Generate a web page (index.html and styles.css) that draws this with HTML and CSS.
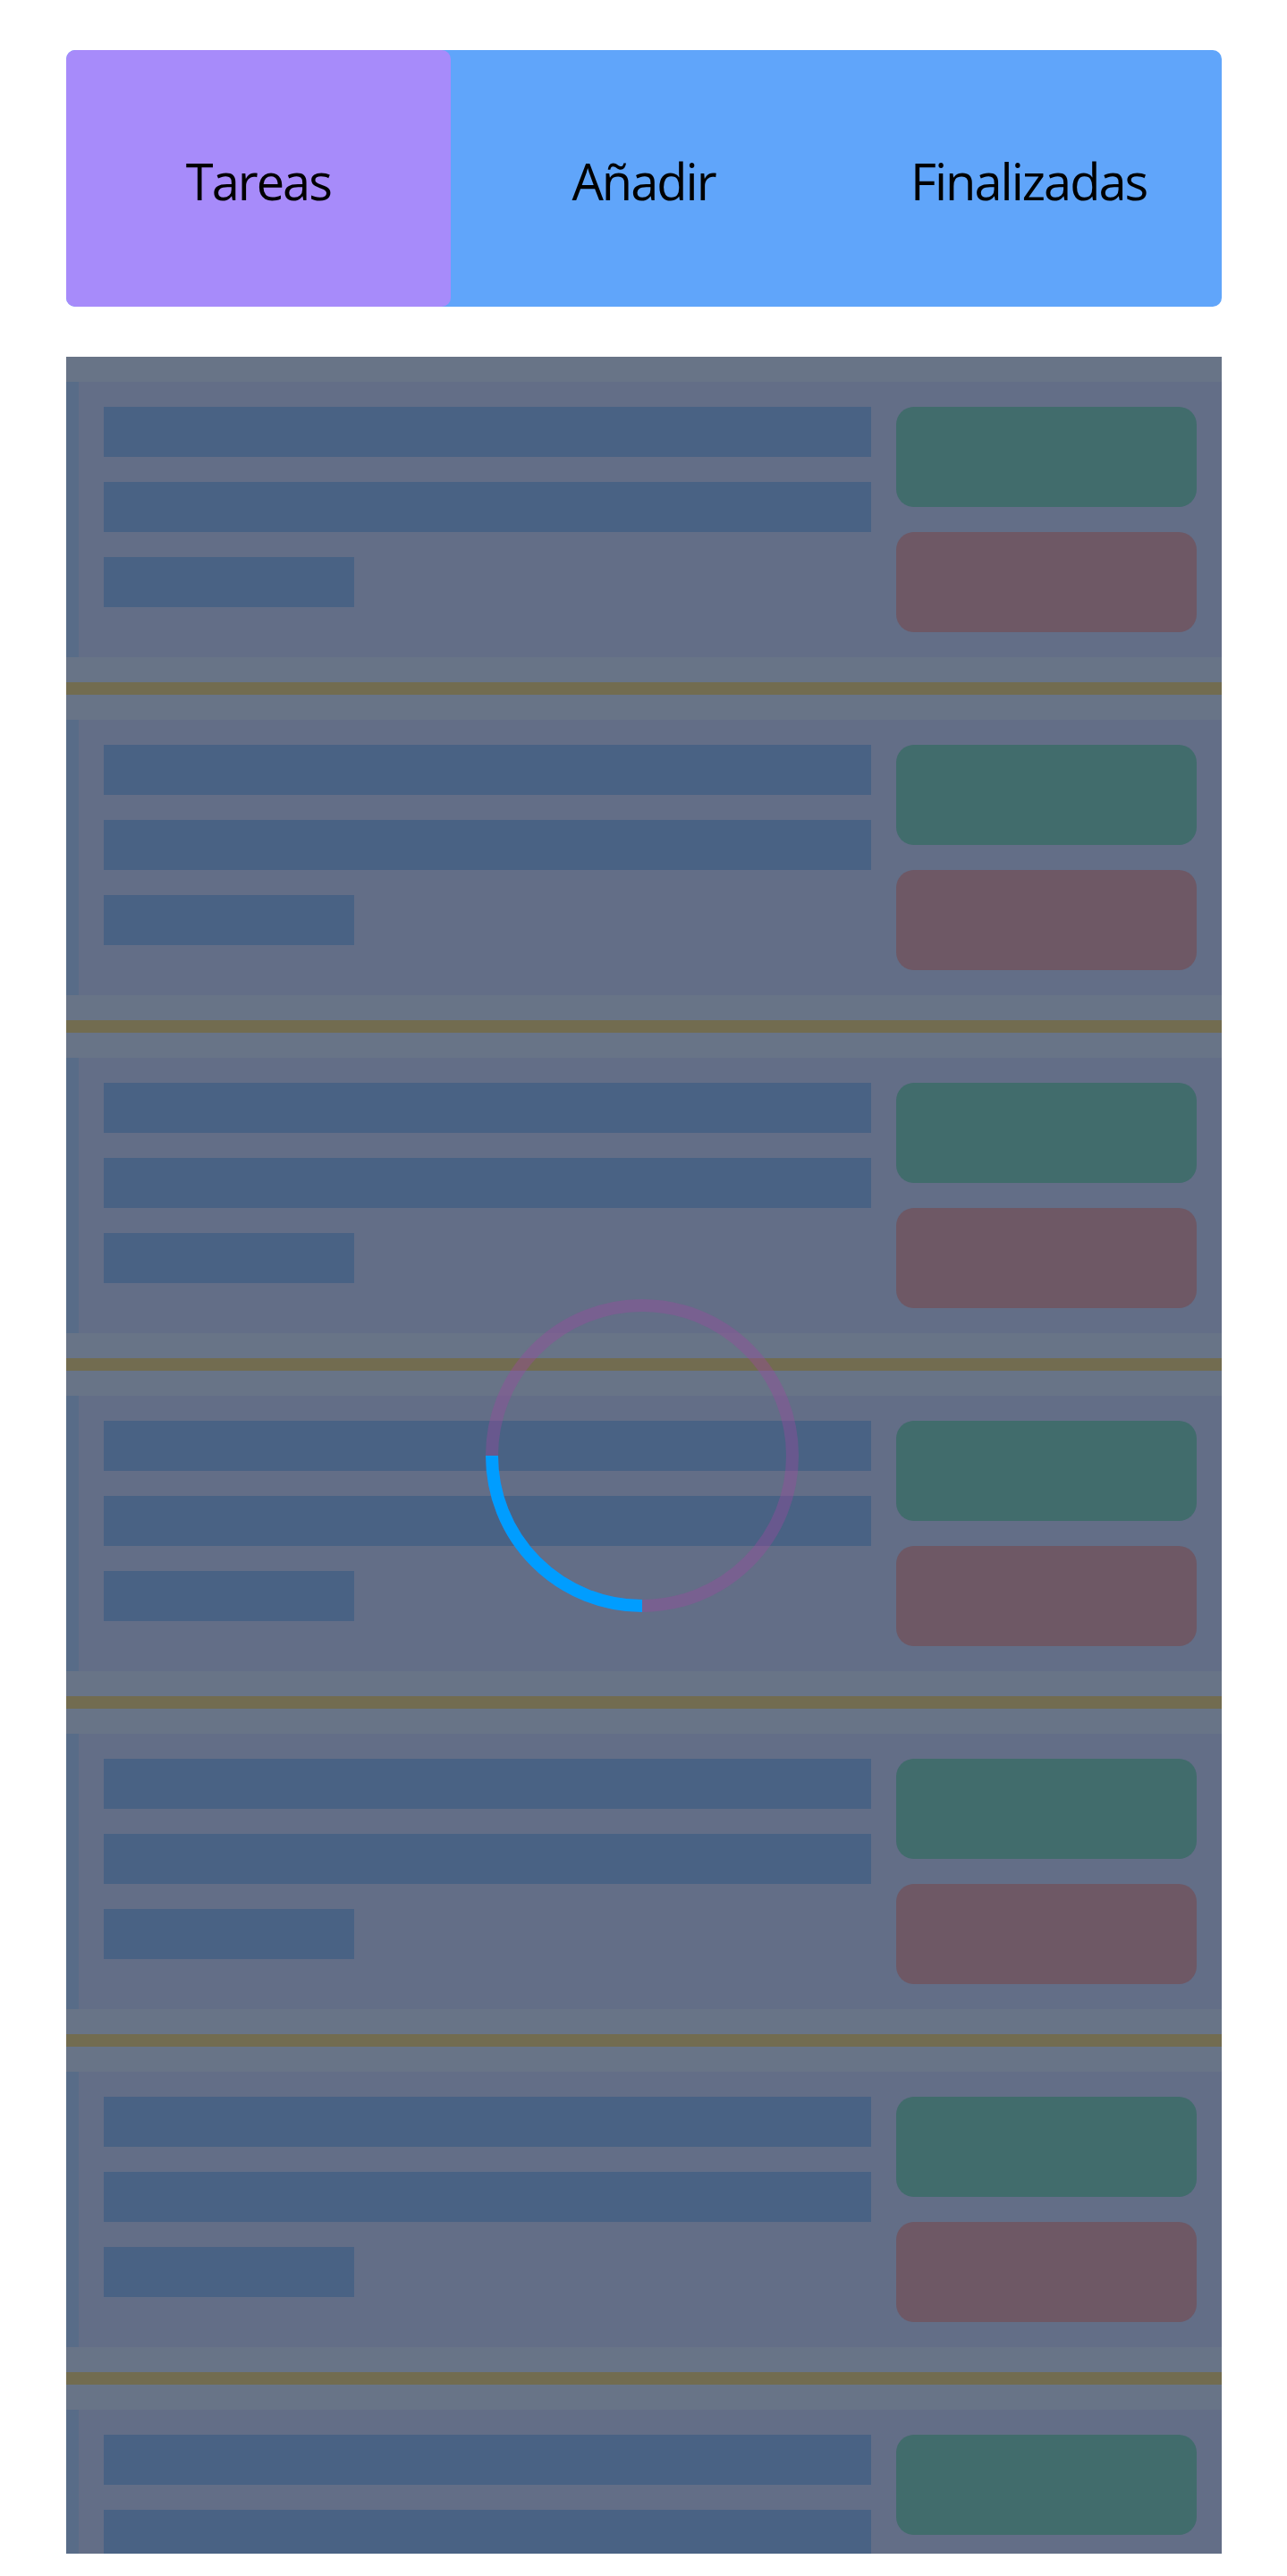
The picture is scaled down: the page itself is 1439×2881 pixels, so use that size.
FILE: index.html
```html
<!DOCTYPE html>
<html lang="es">
<head>
<meta charset="utf-8">
<title>Tareas</title>
<link rel="stylesheet" href="styles.css">
</head>
<body>
<div class="page">
  <nav class="tabs">
    <div class="tab tab-active">Tareas</div>
    <div class="tab">Añadir</div>
    <div class="tab">Finalizadas</div>
  </nav>
  <section class="list">
    <div class="item"><div class="card"><div class="lines"><div class="bar"></div><div class="bar"></div><div class="bar bar-short"></div></div><div class="actions"><div class="btn btn-ok"></div><div class="btn btn-del"></div></div></div><div class="sep"><div class="sep-line"></div></div></div>
    <div class="item"><div class="card"><div class="lines"><div class="bar"></div><div class="bar"></div><div class="bar bar-short"></div></div><div class="actions"><div class="btn btn-ok"></div><div class="btn btn-del"></div></div></div><div class="sep"><div class="sep-line"></div></div></div>
    <div class="item"><div class="card"><div class="lines"><div class="bar"></div><div class="bar"></div><div class="bar bar-short"></div></div><div class="actions"><div class="btn btn-ok"></div><div class="btn btn-del"></div></div></div><div class="sep"><div class="sep-line"></div></div></div>
    <div class="item"><div class="card"><div class="lines"><div class="bar"></div><div class="bar"></div><div class="bar bar-short"></div></div><div class="actions"><div class="btn btn-ok"></div><div class="btn btn-del"></div></div></div><div class="sep"><div class="sep-line"></div></div></div>
    <div class="item"><div class="card"><div class="lines"><div class="bar"></div><div class="bar"></div><div class="bar bar-short"></div></div><div class="actions"><div class="btn btn-ok"></div><div class="btn btn-del"></div></div></div><div class="sep"><div class="sep-line"></div></div></div>
    <div class="item"><div class="card"><div class="lines"><div class="bar"></div><div class="bar"></div><div class="bar bar-short"></div></div><div class="actions"><div class="btn btn-ok"></div><div class="btn btn-del"></div></div></div><div class="sep"><div class="sep-line"></div></div></div>
    <div class="item"><div class="card"><div class="lines"><div class="bar"></div><div class="bar"></div><div class="bar bar-short"></div></div><div class="actions"><div class="btn btn-ok"></div><div class="btn btn-del"></div></div></div><div class="sep"><div class="sep-line"></div></div></div>
    <div class="spinner">
      <svg width="350" height="350" viewBox="0 0 350 350">
        <circle cx="175" cy="175" r="168" fill="none" stroke="rgba(152,75,158,0.4)" stroke-width="14"/>
        <path d="M7 175 A168 168 0 0 0 175 343" fill="none" stroke="#009dff" stroke-width="14"/>
      </svg>
    </div>
  </section>
</div>
</body>
</html>
```

FILE: styles.css
```css
html, body {
  margin: 0;
  padding: 0;
  background: #ffffff;
}

body {
  font-family: "Open Sans", "Noto Sans", sans-serif;
}

.page {
  width: 1292px;
  margin: 0 auto;
  padding-top: 56px;
  display: flex;
  flex-direction: column;
  gap: 56px;
}

.tabs {
  display: flex;
  height: 287px;
  background: #60a5fa;
  border-radius: 10px;
}

.tab {
  flex: 1;
  display: flex;
  align-items: center;
  justify-content: center;
  font-size: 56px;
  letter-spacing: -2px;
  color: #000;
  border-radius: 10px;
  padding-top: 4px;
}

.tab-active {
  background: #a78bfa;
}

.list {
  position: relative;
  height: 2457px;
  overflow: hidden;
  background: #687487;
  padding-top: 28px;
  box-sizing: border-box;
}

.card {
  display: flex;
  gap: 28px;
  padding: 28px;
  background: #636e87;
  border-left: 14px solid #586c88;
}

.lines {
  flex: 1;
  display: flex;
  flex-direction: column;
  gap: 28px;
}

.bar {
  height: 56px;
  background: #496284;
}

.bar-short {
  width: 280px;
}

.actions {
  width: 336px;
  display: flex;
  flex-direction: column;
  gap: 28px;
}

.btn {
  height: 112px;
  border-radius: 20px;
}

.btn-ok {
  background: #416c6c;
}

.btn-del {
  background: #6e5865;
}

.sep {
  padding: 28px 0;
}

.sep-line {
  height: 14px;
  background: #726c50;
}

.spinner {
  position: absolute;
  left: 50%;
  top: 50%;
  width: 350px;
  height: 350px;
  margin-left: -177px;
  margin-top: -175px;
}

.spinner svg {
  display: block;
}
```
